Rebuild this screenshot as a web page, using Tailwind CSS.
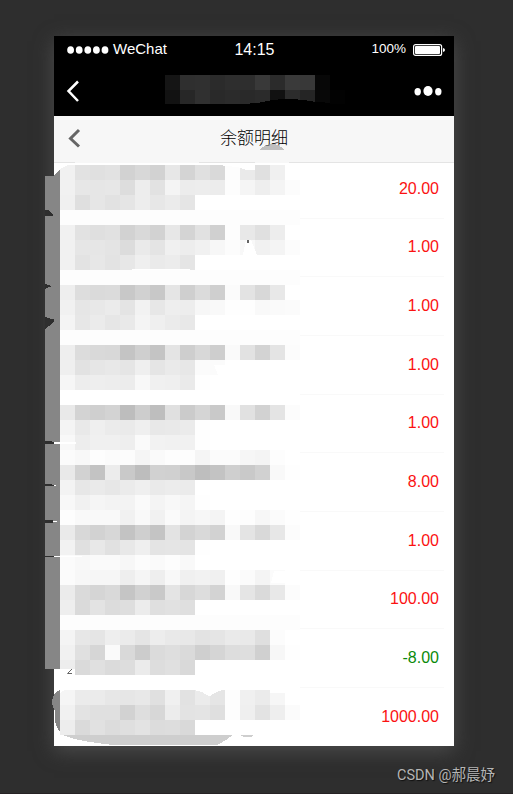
<!DOCTYPE html>
<html lang="zh-CN">
<head>
<meta charset="utf-8">
<title>余额明细</title>
<script src="https://cdn.jsdelivr.net/npm/@tailwindcss/browser@4"></script>
</head>
<body class="relative h-[794px] w-[513px] overflow-hidden bg-[#2e2e2e] pt-9 pl-[54px] font-['Liberation_Sans','Noto_Sans_CJK_SC',sans-serif]">
<main class="flex h-[710px] w-[400px] flex-col bg-white shadow-[0_5px_18px_#4c4c4c]">
  <header class="h-20 shrink-0 bg-black text-white">
    <div class="grid h-[26px] grid-cols-3 items-center pr-[9px] pl-[13px]">
      <div class="flex items-center gap-1 text-[15px]">
        <svg class="mt-[2px]" width="42" height="8" viewBox="0 0 42 8" fill="#fff"><ellipse cx="3.6" cy="4" rx="3.4" ry="3.8"/><ellipse cx="12.2" cy="4" rx="3.4" ry="3.8"/><ellipse cx="20.8" cy="4" rx="3.4" ry="3.8"/><ellipse cx="29.4" cy="4" rx="3.4" ry="3.8"/><ellipse cx="38" cy="4" rx="3.4" ry="3.8"/></svg>
        <span>WeChat</span>
      </div>
      <div class="pt-[1px] pr-[3px] text-center text-base">14:15</div>
      <div class="flex items-center justify-end gap-[7px] text-[13.500px]">
        <span>100%</span>
        <svg class="mt-[2px]" width="32" height="12" viewBox="0 0 32 12"><rect x=".6" y=".6" width="28" height="10.8" rx="2" fill="none" stroke="#fff" stroke-width="1.2"/><rect x="2" y="2" width="25" height="8" rx="1" fill="#fff"/><path d="M30 4q2 .5 2 2t-2 2z" fill="#fff"/></svg>
      </div>
    </div>
    <div class="flex h-[54px] items-center justify-between pr-3 pl-3">
      <svg class="mt-[3px]" width="14" height="24" viewBox="0 0 14 24" fill="none" stroke="#fff" stroke-width="2.5"><path d="M12 2.500 2.500 12l9.500 10"/></svg>
      <svg class="mt-[4px]" width="28" height="12" viewBox="0 0 28 12" fill="#fff"><ellipse cx="3.7" cy="6.7" rx="3.2" ry="3.7"/><ellipse cx="14" cy="6" rx="4.6" ry="5"/><ellipse cx="24.3" cy="6.7" rx="3.2" ry="3.7"/></svg>
    </div>
  </header>
  <nav class="grid h-[47px] shrink-0 grid-cols-[40px_1fr_40px] items-center border-b border-[#e4e4e4] bg-[#f7f7f7]">
    <svg class="-mt-[3px] ml-[13px]" width="14" height="20" viewBox="0 0 14 20" fill="none" stroke="#666" stroke-width="3"><path d="M12 2 3.500 10.500l8.500 8"/></svg>
    <h1 class="text-center text-[17px] font-light text-black">余额明细</h1>
  </nav>
  <ul id="list" class="-mt-[3px] flex flex-col pr-[10px] pl-[15px] text-base"></ul>
</main>
<svg id="art" class="absolute top-0 left-0" width="513" height="794" viewBox="0 0 513 794" shape-rendering="crispEdges">
  <path fill="#fff" d="M60 164H300V745H60z"/>
  <path fill="#f7f7f7" d="M75 161H199V163H75zM255 161h34v2h-34z"/>
  <path fill="#868686" d="M45 176H54L60 169V669H45z"/>
  <path fill="#2e2e2e" d="M45 210h3l5 5v1h-8zM45 284l7 2-7 3zM45 317l6 2h3v3l-5 4-4 3zM45 441h4l5 1v2h-9zM45 484h5l4 1v1h-9zM45 520h7l2 2h-1v1h-8zM45 556h9v1h-9z"/>
  <path fill="#868686" d="M60 690q-8 2-8 14l3 7v9q1 8 5 12z"/>
  <path fill="#cecece" d="M63 735H232q-3 4-15 10H114Q75 741 63 735zM240 735h14l-3 2h-7z"/>
  <path fill="#999" fill-opacity=".6" d="M260 150q4-6 12-6t12 6z"/>
  <g id="cells"></g>
  <g id="title"></g>
  <path fill="#000" d="M250 103h7l5-1q12-3 24-3 17 0 29 3h7l5 1h3v3h-80z"/>
  <path fill="#fff" d="M60 169l8-4h-8zM202 165h53v5h-9l-9-3-19-2zM246 240h5l6 15h-14zM214 365h13v10h-9zM54 442h21l2 1-2 1H54zM54 485h2v1h-2zM53 521h4v1h-4zM54 556h28v1H54zM274 571h17l-6 12h-14zM60 669h15v6H60zM194 690h29q-8 2-13 6-3 0-8-4zM270 690h15v3h-15zM60 690h5l-5 3zM132 269h58v1h-58z"/>
  <path fill="#666" d="M247 240h2v3h-2z"/>
  <path fill="none" stroke="#666" shape-rendering="auto" d="M72 669 67.500 673.500H72"/>
  <path fill="#262224" d="M0 793h513v1H0z"/>
</svg>
<div class="absolute top-[766px] left-[397px] whitespace-nowrap font-[Roboto,'Noto_Sans_CJK_SC',sans-serif] text-[14.500px] leading-5 text-[#b5b5b5] [text-shadow:1px_1px_1px_#111]">CSDN @郝晨妤</div>
<script>
const amounts = ['20.00','1.00','1.00','1.00','1.00','8.00','1.00','100.00','-8.00','1000.00'];
document.getElementById('list').innerHTML = amounts.map((v, i) =>
  `<li class="flex h-[58.67px] items-center justify-end pr-[5px] ${i < 9 ? 'border-b border-[#f9f9f9]' : ''} ${v[0] === '-' ? 'text-[#0a8a0a]' : 'text-[#fb1212]'}"><span class="leading-5">${v}</span></li>`).join('');
const rect = (x, y, c, h) => `<rect x="${x}" y="${y}" width="15" height="${h || 15}" fill="#${c}${c}${c}"/>`;
// Grey level of each 15px mosaic cell, starting at x=60
const mosaic = {
165:'f1 e2 e0 e2 d2 d8 d2 e7 d4 e0 d9 fd ea e0 f0',
180:'f1 e7 e6 e7 dd ed e2 f4 ec ed ec fd f5 ee f4 fc',
195:'f0 df e6 e2 e5 ed e7 eb e5',
210:'fd fd fd fd fd fd fd fd fd fd fd fd fd fd fd fd',
225:'f1 e2 df e1 d2 d9 d2 e7 d4 e1 d0 fd e8 e0 ed',
240:'f1 e6 e6 e4 dc ea e4 f0 ed f1 f7 fc f8 f1 f4 fc',
255:'f1 e3 e7 e3 e7 ef ea ec e5',
270:'fd fd fd fd fd fd fd fd fd fd fd fd fd fd fd fd',
285:'ee dd da db c8 d1 c8 e5 cf db cf fb e3 d8 e8',
300:'f1 e6 e8 eb e4 f2 e7 ee ed f7 f9 fe fe f9 fa fb',
315:'f4 e7 eb e6 e9 f4 ef eb e8',
330:'fd fd fd fd fd fd fd fd fd fd fd fd fd fd fd fd',
345:'ee dc d9 d8 c4 cf c4 e4 ce d8 ce fa e2 d3 e4 fc',
360:'ef e2 e6 e8 e5 ef e5 ea e7 fb fb',
375:'f6 ed ee ed ec f8 f0 ef ea fe',
405:'e9 d3 cf d3 bd cd be e0 cb d5 c9 f9 e1 d2 e4 fc',
420:'f4 e9 ef eb ea ef e8 e9 eb fe',
435:'f8 ed f0 f0 ee fa f2 f1 f1 fe',
450:'fb f8 fd fb fc f5 fa fd fd f5 fb fb f6 f4 fd',
465:'e9 d2 c3 ec c9 bd d1 d0 c8 be c3 cf c9 d1 f9 fe',
480:'f3 e7 ea e7 eb ef ea ec eb',
495:'f8 f1 f5 f3 f3 fa f4 f8 f5 fe',
510:'fd f9 f9 f9 f1 f9 f1 fa f4 f7 f4 fe fd f7 fb fe',
525:'ea d8 d2 d7 c3 cf c4 e3 d3 d9 d2 f9 e4 d9 e7 fc',
540:'f2 e0 e8 e1 e8 ef e4 e5 e4 fe',
555:'fb f8 fa fa f7 fc fa fd f9',
570:'fb f7 f6 f6 ee f5 ee f8 f0 f2 f0 fe fb f4 fb',
585:'eb da d5 d9 c5 d1 c9 e4 d7 dd d3 f9 e5 da e8 fc',
600:'ee da e3 dc de ec df e1 df',
615:'fd fd fd fd fd fd fd fd fd fd fd fd fd fd fd fd',
630:'f4 e7 e5 ee eb e5 ed e9 e8 e3 e5 ea e9 df fc',
645:'f1 e0 d6 fa d9 cc db de da cf d5 dd de d0 f7 fe',
660:'ed da e0 db dd eb dd e0 d9',
690:'f5 eb eb e7 e6 e8 e0 f0 e2 eb e5 fd f0 eb f6',
705:'f1 e3 e0 e0 d2 de d7 ec e3 e4 df fd ef e3 ee fb',
720:'ed da e1 dc df e3 dc dd d9'};
let cells = '';
for (const y in mosaic) mosaic[y].split(' ').forEach((c, i) => cells += rect(60 + i * 15, +y, c));
document.getElementById('cells').innerHTML = cells;
const masked = {75:'15 2f 30 2b 2e 2e 39 2b 3a 38 07', 90:'12 27 30 29 2b 29 2b 11 2c 25 08 02'};
let title = '';
for (const y in masked) masked[y].split(' ').forEach((c, i) => title += rect(165 + i * 15, +y, c, y === '90' ? 14 : 15));
document.getElementById('title').innerHTML = title;
</script>
</body>
</html>
